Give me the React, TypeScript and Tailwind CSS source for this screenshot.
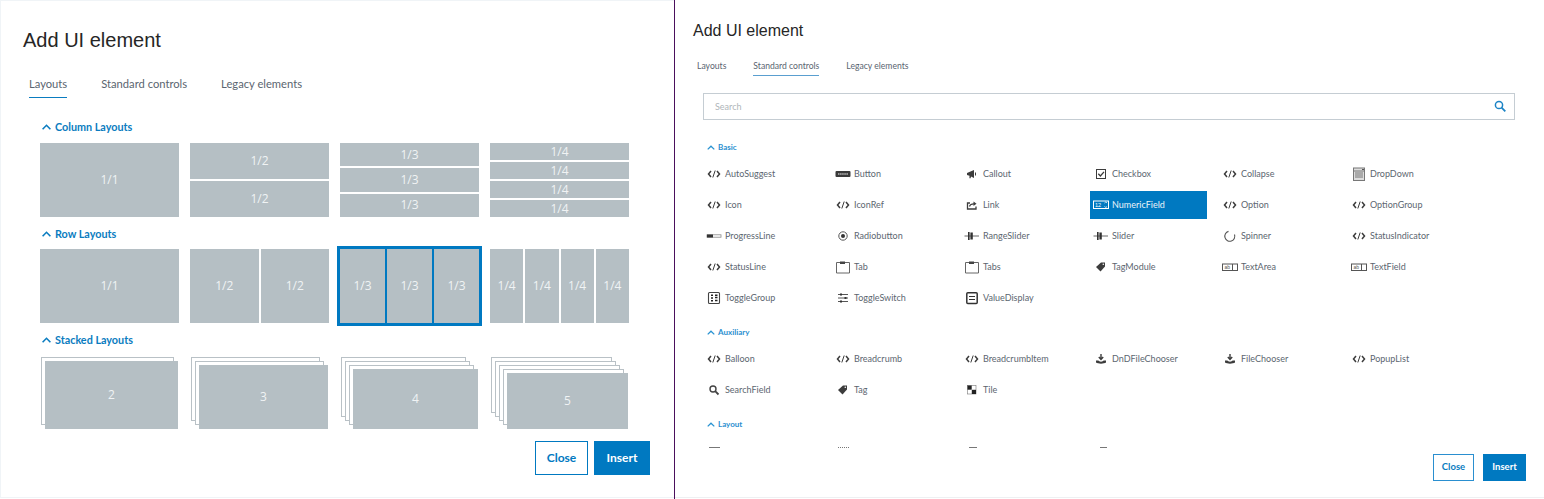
import React from "react";

function Chevron({ small }: { small?: boolean }) {
  return small ? (
    <svg width="8" height="5" viewBox="0 0 8 5" className="shrink-0">
      <path d="M0.7 4.4 L4 1.2 L7.3 4.4" fill="none" stroke="#2a93d2" strokeWidth="1.3" />
    </svg>
  ) : (
    <svg width="9" height="6" viewBox="0 0 9 6" className="shrink-0">
      <path d="M0.6 5.2 L4.5 1.3 L8.4 5.2" fill="none" stroke="#0a7cc0" strokeWidth="1.6" />
    </svg>
  );
}

function Tile({ label }: { label: string | number }) {
  return (
    <div className="flex min-h-0 min-w-0 flex-1 items-center justify-center bg-[#b5bfc4] font-['Open_Sans'] text-[12px] text-[#f0f3f4]">
      {label}
    </div>
  );
}

function Cols({ n, label }: { n: number; label: string }) {
  return (
    <div className="flex h-[74px] w-[139px] flex-col gap-[2px]">
      {Array.from({ length: n }).map((_, i) => (
        <Tile key={i} label={label} />
      ))}
    </div>
  );
}

function Rows({ n, label }: { n: number; label: string }) {
  return (
    <div className="flex h-[74px] w-[139px] gap-[2px]">
      {Array.from({ length: n }).map((_, i) => (
        <Tile key={i} label={label} />
      ))}
    </div>
  );
}

function Stack({ n }: { n: number }) {
  const w = 141 - n * 4;
  const h = 76 - n * 4;
  return (
    <div className="relative h-[72px] w-[139px]">
      {Array.from({ length: n - 1 }).map((_, i) => (
        <div
          key={i}
          className="absolute border border-[#b9c1c6] bg-white"
          style={{ left: 1 + i * 4, top: i * 4, width: w, height: h }}
        />
      ))}
      <div
        className="absolute flex items-center justify-center bg-[#b5bfc4] font-['Open_Sans'] text-[12px] text-[#f0f3f4]"
        style={{ left: 1 + (n - 1) * 4, top: (n - 1) * 4, width: w, height: h }}
      >
        {n}
      </div>
    </div>
  );
}

function BigHeading({ children, className = "" }: { children: React.ReactNode; className?: string }) {
  return (
    <div className={`flex h-[14px] items-center gap-[4px] pl-[2px] text-[10.8px] font-bold text-[#0a7cc0] ${className}`}>
      <Chevron />
      <span>{children}</span>
    </div>
  );
}

type IconName =
  | "code" | "button" | "callout" | "check" | "drop" | "link" | "num" | "progress" | "radio"
  | "slider" | "spinner" | "tab" | "tag" | "text" | "group" | "switch" | "value" | "upload"
  | "search" | "tile";

function Glyph({ name, selected }: { name: IconName; selected?: boolean }) {
  const c = selected ? "#ffffff" : "#3c3c3c";
  const common = { width: 18, height: 16, viewBox: "0 0 18 16", fill: "none" as const };
  switch (name) {
    case "code":
      return (
        <svg {...common}>
          <path d="M6 5 L3.5 8 L6 11 M12 5 L14.5 8 L12 11" stroke={c} strokeWidth="1.5" />
          <path d="M10.2 4.5 L7.8 11.5" stroke={c} strokeWidth="1" />
        </svg>
      );
    case "button":
      return (
        <svg {...common}>
          <rect x="1.5" y="5" width="15" height="6" rx="1" fill="#3a3a3a" />
          <path d="M4 8 H14" stroke="#bbb" strokeWidth="1.4" strokeDasharray="1.5 .6" />
        </svg>
      );
    case "callout":
      return (
        <svg {...common}>
          <path d="M4 7 L11 4 V12 L8 10.6 L7.6 12.3 H6.4 L6.5 9.8 L4 9 Z" fill={c} />
          <path d="M12.5 6.5 V9.5" stroke={c} strokeWidth="1" />
        </svg>
      );
    case "check":
      return (
        <svg {...common}>
          <rect x="4.5" y="3.5" width="9" height="9" stroke={c} />
          <path d="M6.3 7.8 L8.4 10 L12 5.8" stroke={c} strokeWidth="1.3" />
        </svg>
      );
    case "drop":
      return (
        <svg width="14" height="14" viewBox="0 0 14 14" fill="none">
          <rect x="1.5" y="1" width="11" height="12.5" fill="#ddd" stroke="#777" />
          <path d="M3 6 H11 M3 8 H11 M3 10 H11" stroke="#777" />
          <path d="M1.5 4 H12.5" stroke="#777" />
          <path d="M10 2.5 H12" stroke="#555" />
        </svg>
      );
    case "link":
      return (
        <svg {...common}>
          <path d="M7 6 H4.5 V12 H13 V9.5" stroke={c} strokeWidth="1.3" />
          <path d="M6.5 9.5 C7 7.5 9 6.8 11 6.8" stroke={c} strokeWidth="1.2" />
          <path d="M10.5 4.5 L13.5 6.8 L10.5 9 Z" fill={c} />
        </svg>
      );
    case "num":
      return (
        <svg width="16" height="10" viewBox="0 0 16 10" fill="none">
          <rect x="0.5" y="1" width="15" height="7.5" stroke={c} />
          <text x="2" y="7" fontSize="5.5" fill={c} fontFamily="'Liberation Sans', sans-serif">12</text>
          <path d="M11.5 3 L12.8 2 L14 3 M11.5 6.5 L12.8 7.5 L14 6.5" stroke={c} strokeWidth="0.8" />
        </svg>
      );
    case "progress":
      return (
        <svg {...common}>
          <rect x="2" y="6.8" width="14" height="2.4" stroke="#888" strokeWidth=".8" />
          <rect x="2" y="6.5" width="6" height="3" fill="#333" />
        </svg>
      );
    case "radio":
      return (
        <svg {...common}>
          <circle cx="9" cy="8" r="4.2" stroke="#555" />
          <circle cx="9" cy="8" r="2" fill="#333" />
        </svg>
      );
    case "slider":
      return (
        <svg {...common}>
          <path d="M1.5 8 H16" stroke="#666" />
          <rect x="5" y="4" width="1.6" height="8" fill="#333" />
          <rect x="7.4" y="4.5" width="2.4" height="7" fill="#333" />
        </svg>
      );
    case "spinner":
      return (
        <svg {...common}>
          <path d="M7.5 3.4 A5 5 0 1 0 13.5 6.5" stroke="#555" strokeWidth="1.1" />
        </svg>
      );
    case "tab":
      return (
        <svg {...common}>
          <path d="M2.5 3.5 H15.5 V14 H2.5 Z" stroke="#666" />
          <rect x="6" y="2.5" width="5" height="2.5" fill="#444" />
        </svg>
      );
    case "tag":
      return (
        <svg {...common}>
          <path d="M4 8 L9 3.5 H13 V7.5 L8.5 12.5 Z" fill={c} />
          <circle cx="11.3" cy="5.2" r="0.8" fill="#fff" />
        </svg>
      );
    case "text":
      return (
        <svg {...common}>
          <rect x="1.5" y="5" width="15" height="6.5" stroke="#555" />
          <path d="M11.5 5 V11.5" stroke="#555" />
          <text x="3.5" y="10" fontSize="5" fill="#555" fontFamily="'Liberation Sans', sans-serif">ab</text>
        </svg>
      );
    case "group":
      return (
        <svg {...common}>
          <rect x="3.5" y="2.5" width="11" height="11" rx="1" stroke="#444" strokeWidth="1.1" />
          <path d="M6 5.2 H8 M6 8 H8 M6 10.8 H8" stroke="#222" strokeWidth="1.5" />
          <path d="M10 5.2 H12.5 M10 7.5 H12.5 M10 10.5 H12.5" stroke="#222" strokeWidth="1.4" />
        </svg>
      );
    case "switch":
      return (
        <svg {...common}>
          <path d="M4 4.5 H14 M4 8 H14 M4 11.5 H14" stroke="#555" />
          <rect x="6" y="3.5" width="2" height="2" fill="#333" />
          <rect x="10.5" y="7" width="2" height="2" fill="#333" />
          <rect x="6" y="10.5" width="2" height="2" fill="#333" />
        </svg>
      );
    case "value":
      return (
        <svg {...common}>
          <rect x="3.8" y="2.8" width="10.4" height="10.6" rx="1" stroke="#333" strokeWidth="1.5" />
          <path d="M6 6.5 H12 M6 9.5 H12" stroke="#333" strokeWidth="1.2" />
        </svg>
      );
    case "upload":
      return (
        <svg {...common}>
          <path d="M9 3 V8 M6.8 6 L9 8.4 L11.2 6" stroke={c} strokeWidth="1.4" />
          <path d="M4 9.5 H6.5 C7 11 11 11 11.5 9.5 H14 V11.5 C12 13 6 13 4 11.5 Z" fill={c} />
        </svg>
      );
    case "search":
      return (
        <svg {...common}>
          <circle cx="8" cy="7" r="3" stroke="#444" strokeWidth="1.4" />
          <path d="M10.2 9.2 L13.5 12.5" stroke="#444" strokeWidth="1.8" />
        </svg>
      );
    case "tile":
      return (
        <svg {...common}>
          <rect x="4.5" y="3.5" width="8.5" height="8.5" stroke="#777" strokeWidth=".6" />
          <rect x="4.5" y="3.5" width="4.2" height="4.2" fill="#222" />
          <rect x="8.8" y="7.8" width="4.2" height="4.2" fill="#222" />
        </svg>
      );
  }
}

type Item = [string, IconName];

const basic: Item[] = [
  ["AutoSuggest", "code"], ["Button", "button"], ["Callout", "callout"], ["Checkbox", "check"], ["Collapse", "code"], ["DropDown", "drop"],
  ["Icon", "code"], ["IconRef", "code"], ["Link", "link"], ["NumericField", "num"], ["Option", "code"], ["OptionGroup", "code"],
  ["ProgressLine", "progress"], ["Radiobutton", "radio"], ["RangeSlider", "slider"], ["Slider", "slider"], ["Spinner", "spinner"], ["StatusIndicator", "code"],
  ["StatusLine", "code"], ["Tab", "tab"], ["Tabs", "tab"], ["TagModule", "tag"], ["TextArea", "text"], ["TextField", "text"],
  ["ToggleGroup", "group"], ["ToggleSwitch", "switch"], ["ValueDisplay", "value"],
];

const auxiliary: Item[] = [
  ["Balloon", "code"], ["Breadcrumb", "code"], ["BreadcrumbItem", "code"], ["DnDFileChooser", "upload"], ["FileChooser", "upload"], ["PopupList", "code"],
  ["SearchField", "search"], ["Tag", "tag"], ["Tile", "tile"],
];

function Cell({ item }: { item: Item }) {
  const selected = item[0] === "NumericField";
  return (
    <div className={`flex h-[28px] w-[117px] items-center text-[9px] ${selected ? "bg-[#0079c1] text-[#eaf4fa]" : "text-[#5c6670]"}`}>
      <span className="flex w-[22px] shrink-0 items-center justify-center">
        <Glyph name={item[1]} selected={selected} />
      </span>
      <span>{item[0]}</span>
    </div>
  );
}

function CellGrid({ items }: { items: Item[] }) {
  return (
    <div className="grid grid-cols-[repeat(6,129px)] gap-y-[3px]">
      {items.map((it) => (
        <Cell key={it[0]} item={it} />
      ))}
    </div>
  );
}

function SmallHeading({ children, className = "" }: { children: React.ReactNode; className?: string }) {
  return (
    <div className={`mb-[6px] flex h-[14px] items-center gap-[3px] pl-[4px] text-[8px] font-bold text-[#2a8fd0] ${className}`}>
      <Chevron small />
      <span>{children}</span>
    </div>
  );
}

export default function App() {
  return (
    <div
      className="flex h-[499px] w-[1544px] overflow-hidden bg-white"
      style={{ fontFamily: "Lato, 'Open Sans', sans-serif" }}
    >
      {/* Left dialog */}
      <div className="flex h-[498px] w-[674px] shrink-0 flex-col border-b border-l border-t border-[#f0f4f7]">
        <h1 className="mt-[26px] ml-[22px] h-[26px] text-[20px] leading-[26px] text-[#262626]" style={{ fontFamily: "'Liberation Sans', sans-serif" }}>
          Add UI element
        </h1>
        <div className="mt-[23px] ml-[28px] flex h-[22px] gap-[34px] text-[11.2px] text-[#5a6570]">
          <span className="h-[22px] border-b border-[#0a7cc0] leading-[16px]">Layouts</span>
          <span className="leading-[16px]">Standard controls</span>
          <span className="leading-[16px]">Legacy elements</span>
        </div>
        <div className="ml-[39px] mt-[22px]">
          <BigHeading>Column Layouts</BigHeading>
          <div className="mt-[9px] flex gap-[11px]">
            <Cols n={1} label="1/1" />
            <Cols n={2} label="1/2" />
            <Cols n={3} label="1/3" />
            <Cols n={4} label="1/4" />
          </div>
          <BigHeading className="mt-[10px]">Row Layouts</BigHeading>
          <div className="mt-[8px] flex gap-[11px]">
            <Rows n={1} label="1/1" />
            <Rows n={2} label="1/2" />
            <div className="-m-[3px] border-[3px] border-[#0079c1] bg-[#0079c1]">
              <Rows n={3} label="1/3" />
            </div>
            <Rows n={4} label="1/4" />
          </div>
          <BigHeading className="mt-[10px]">Stacked Layouts</BigHeading>
          <div className="mt-[10px] flex gap-[11px]">
            <Stack n={2} />
            <Stack n={3} />
            <Stack n={4} />
            <Stack n={5} />
          </div>
        </div>
        <div className="mt-[12px] flex justify-end gap-[6px] pr-[24px] text-[12px] font-bold">
          <button className="h-[34px] w-[53px] border border-[#0079c1] bg-white text-[#0079c1]">Close</button>
          <button className="h-[34px] w-[56px] bg-[#0079c1] text-white">Insert</button>
        </div>
      </div>

      <div className="h-[499px] w-[1px] shrink-0 bg-[#4a0f5c]" />

      {/* Right dialog */}
      <div className="flex h-[498px] min-w-0 flex-1 flex-col border-b border-[#eef0f2]">
        <h2 className="mt-[22px] ml-[18px] h-[18px] text-[16px] leading-[18px] text-[#262626]" style={{ fontFamily: "'Liberation Sans', sans-serif" }}>
          Add UI element
        </h2>
        <div className="mt-[19px] ml-[22px] flex h-[17px] gap-[27px] text-[8.6px] text-[#5a6570]">
          <span className="pt-[1px] leading-[12px]">Layouts</span>
          <span className="h-[17px] border-b border-[#5a9fd0] pt-[1px] leading-[12px]">Standard controls</span>
          <span className="pt-[1px] leading-[12px]">Legacy elements</span>
        </div>
        <div className="relative mt-[17px] ml-[28px] h-[27px] w-[812px] shrink-0 border border-[#c5cdd3]">
          <input
            placeholder="Search"
            className="block h-[25px] w-full bg-transparent pl-[11px] text-[9px] outline-none placeholder:text-[#b0b6ba]"
          />
          <svg width="14" height="14" viewBox="0 0 14 14" className="absolute right-[7px] top-[5px]" fill="none">
            <circle cx="6" cy="6" r="3.6" stroke="#1c84c6" strokeWidth="1.5" />
            <path d="M8.6 8.6 L12.3 12.3" stroke="#1c84c6" strokeWidth="1.8" />
          </svg>
        </div>
        <div className="mt-[20px] ml-[28px] h-[309px] shrink-0 overflow-hidden">
          <SmallHeading>Basic</SmallHeading>
          <CellGrid items={basic} />
          <SmallHeading className="mt-[13px]">Auxiliary</SmallHeading>
          <CellGrid items={auxiliary} />
          <SmallHeading className="mt-[13px]">Layout</SmallHeading>
          <div className="grid grid-cols-[repeat(6,129px)]">
            <div className="h-[28px] pt-[10px] pl-[6px]">
              <div className="h-[10px] w-[11px] border-t border-[#777]" />
            </div>
            <div className="h-[28px] pt-[10px] pl-[6px]">
              <div className="h-[10px] w-[11px] border-t border-dotted border-[#777]" />
            </div>
            <div className="h-[28px] pt-[10px] pl-[8px]">
              <div className="h-[10px] w-[8px] border-t border-[#777]" />
            </div>
            <div className="h-[28px] pt-[10px] pl-[10px]">
              <div className="h-[10px] w-[7px] border-t border-[#777]" />
            </div>
          </div>
        </div>
        <div className="mt-[5px] flex justify-end gap-[9px] pr-[18px] text-[9.5px] font-bold">
          <button className="h-[27px] w-[41px] border border-[#2a8fd0] bg-white text-[#0a7cc0]">Close</button>
          <button className="h-[27px] w-[43px] bg-[#0079c1] text-white">Insert</button>
        </div>
      </div>
    </div>
  );
}
